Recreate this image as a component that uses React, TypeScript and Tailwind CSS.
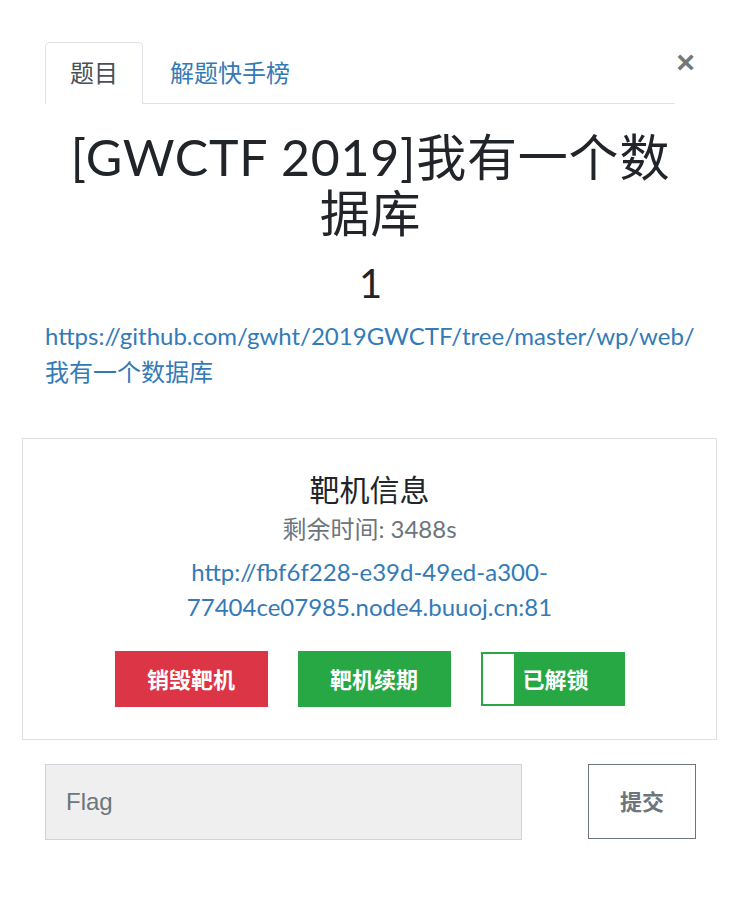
import React, { useState } from 'react';

const cjk = "font-['Lato','Noto_Sans_CJK_SC',sans-serif]";

function App() {
  const [tab, setTab] = useState(0);
  const [flag, setFlag] = useState('');

  return (
    <div className={`min-h-screen bg-white pt-[42px] pr-[26px] pl-[22px] text-[#212529] ${cjk}`}>
      {/* tabs + close */}
      <div className="flex items-start pr-[21px] pl-[23px]">
        <ul className="flex flex-1 border-b border-[#dee2e6]">
          <li
            onClick={() => setTab(0)}
            className={`-mb-px flex h-[62px] cursor-pointer items-center rounded-t-[5px] border px-[24px] text-[24px] ${
              tab === 0 ? 'border-[#dee2e6] border-b-white bg-white text-[#495057]' : 'border-transparent text-[#337ab7]'
            }`}
          >
            题目
          </li>
          <li
            onClick={() => setTab(1)}
            className={`-mb-px flex h-[62px] cursor-pointer items-center rounded-t-[5px] border px-[26px] text-[24px] ${
              tab === 1 ? 'border-[#dee2e6] border-b-white bg-white text-[#495057]' : 'border-transparent text-[#337ab7]'
            }`}
          >
            解题快手榜
          </li>
        </ul>
        <button className="flex h-[40px] w-[21px] items-center justify-center text-[32px] font-bold leading-none text-[#777] font-['Liberation_Sans',sans-serif]">
          ×
        </button>
      </div>

      <div className="pr-[21px] pl-[23px]">
        <h1 className="mt-[25px] text-center text-[50px] leading-[56px] tracking-[0.8px]">
          [GWCTF 2019]我有一个数
          <br />
          据库
        </h1>
        <h3 className="mt-[18px] text-center text-[40px] leading-[48px]">1</h3>
        <a href="#" className="mt-[11px] block text-[24px] leading-[36px] text-[#337ab7]">
          https://github.com/gwht/2019GWCTF/tree/master/wp/web/我有一个数据库
        </a>
      </div>

      {/* target machine card */}
      <div className="mt-[48px] border border-[#dfdfdf] pt-[32px] pb-[32px] text-center">
        <h4 className="text-[30px] leading-[36px]">靶机信息</h4>
        <p className="mt-[4px] text-[24px] leading-[36px] text-[#6c757d]">剩余时间: 3488s</p>
        <a href="#" className="mx-auto mt-[7px] block max-w-[420px] text-[24px] leading-[35px] text-[#337ab7]">
          http://fbf6f228-e39d-49ed-a300-77404ce07985.node4.buuoj.cn:81
        </a>
        <div className="mt-[27px] flex justify-center gap-[30px]">
          <button className="h-[56px] w-[153px] bg-[#dc3545] text-[22px] font-bold text-white">销毁靶机</button>
          <button className="h-[56px] w-[153px] bg-[#28a745] text-[22px] font-bold text-white">靶机续期</button>
          <button className="relative mt-px h-[54px] w-[144px] border-2 border-[#28a745] bg-[#28a745] text-[22px] font-bold text-white">
            <span className="absolute top-0 bottom-0 left-0 w-[31px] bg-white" />
            <span className="relative pl-[6px]">已解锁</span>
          </button>
        </div>
      </div>

      {/* flag submit */}
      <div className="mt-[24px] flex items-start justify-between pr-[21px] pl-[23px]">
        <input
          value={flag}
          onChange={(e) => setFlag(e.target.value)}
          placeholder="Flag"
          className="h-[76px] w-[477px] border border-[#ced4da] bg-[#efefef] px-[20px] text-[24px] text-[#495057] outline-none placeholder:text-[#6c757d] font-['Liberation_Sans',sans-serif]"
        />
        <button className="h-[75px] w-[108px] border border-[#6c757d] bg-white text-[22px] font-bold text-[#6c757d]">
          提交
        </button>
      </div>
    </div>
  );
}

export default App;
